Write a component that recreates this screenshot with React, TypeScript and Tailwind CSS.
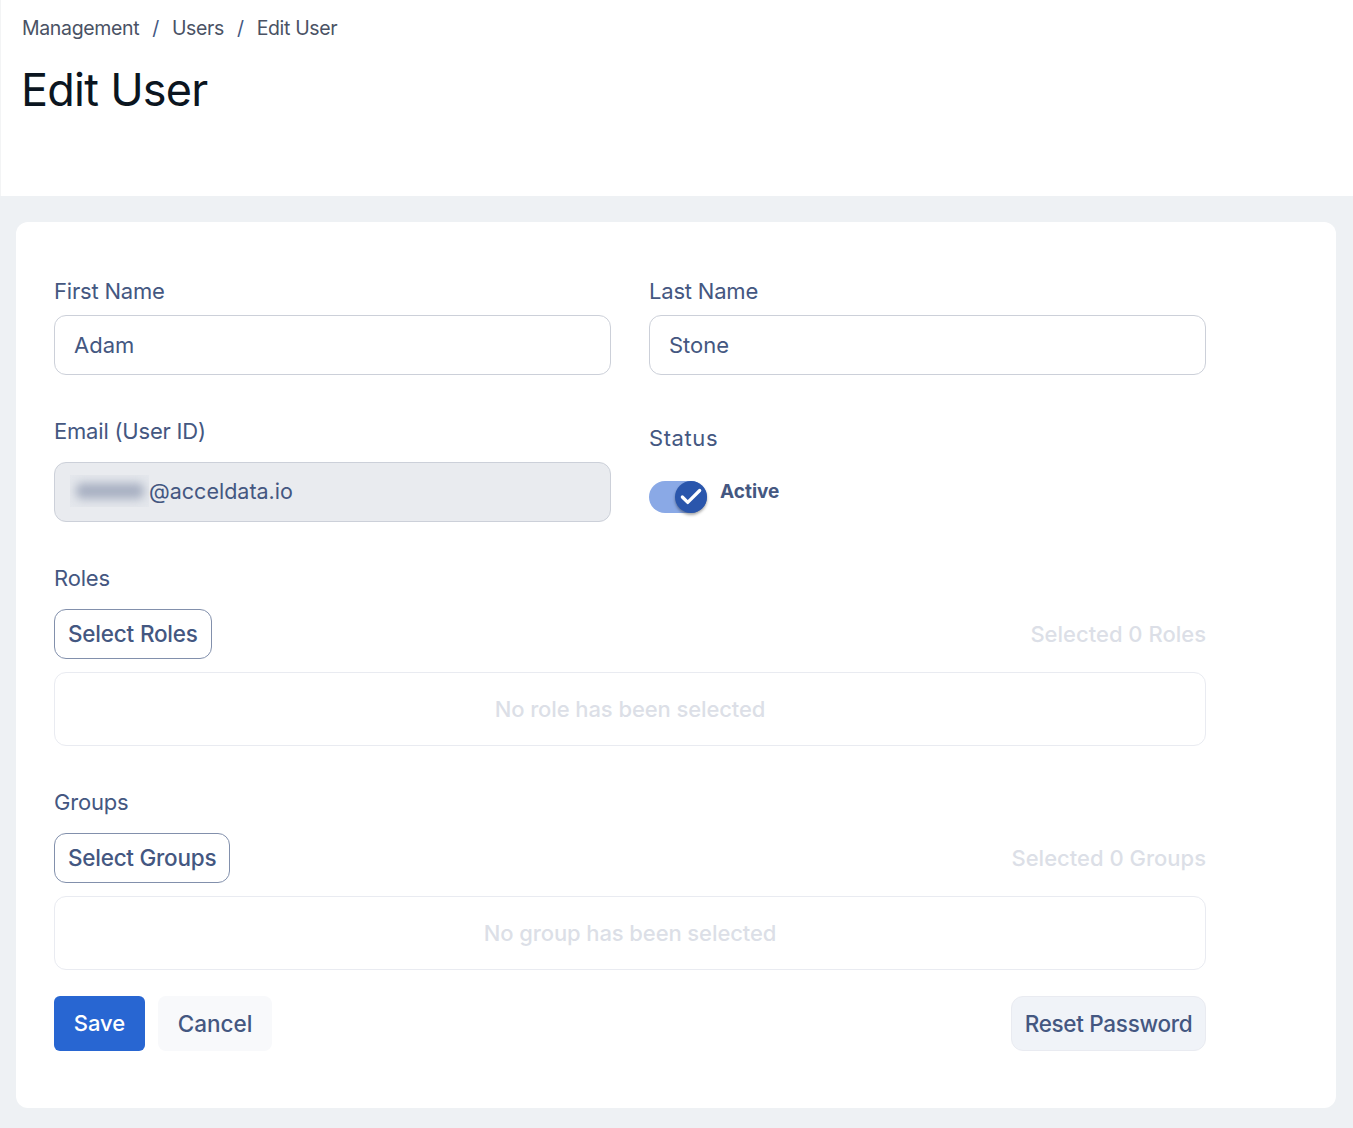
import React from "react";
import { Check } from "lucide-react";

function Label({ children, wide }: { children: React.ReactNode; wide?: boolean }) {
  return (
    <div className={`h-6 text-[22px] leading-6 text-[#445781] ${wide ? "tracking-[0.6px]" : "tracking-[-0.2px]"}`}>
      {children}
    </div>
  );
}

function Picker({ button, count, empty, track }: { button: string; count: string; empty: string; track: string }) {
  return (
    <div>
      <Label>{button.replace("Select ", "")}</Label>
      <div className="mt-[19px] flex items-center justify-between">
        <button className={`h-[50px] px-[13px] rounded-[12px] border border-[#8290ac] bg-white text-[22.5px] font-medium text-[#445781] ${track}`}>
          {button}
        </button>
        <span className="text-[22px] font-medium text-[#dcdfe7]">{count}</span>
      </div>
      <div className="mt-[13px] h-[74px] rounded-[12px] border border-[#e9ebf1] flex items-center justify-center text-[22px] font-medium text-[#dcdfe7] tracking-[-0.1px]">
        {empty}
      </div>
    </div>
  );
}

export default function App() {
  return (
    <div className="min-h-[1128px] bg-[#eef1f4] font-['Inter',sans-serif]">
      <header className="h-[196px] bg-white border-l border-[#f3f4f5] pl-[21px] pt-4">
        <nav className="flex items-center h-[26px] text-[19.5px] text-[#4a5264] tracking-[-0.35px]">
          <span>Management</span>
          <span className="mx-[13px] text-[#445781]">/</span>
          <span>Users</span>
          <span className="mx-[13px] text-[#445781]">/</span>
          <span>Edit User</span>
        </nav>
        <h1 className="mt-5 -ml-px text-[45px] leading-[56px] text-[#0b1520] tracking-[-0.75px]">Edit User</h1>
      </header>
      <main className="pl-4 pr-[17px] pt-[26px] pb-5">
        <div className="bg-white rounded-[12px] pl-[38px] pr-[130px] pt-[57px] pb-[57px]">
          <div className="grid grid-cols-2 gap-x-[38px]">
            <div>
              <Label>First Name</Label>
              <input
                readOnly
                value="Adam"
                className="mt-3 w-full h-[60px] rounded-[12px] border border-[#ccd0d9] bg-white pl-[19px] pr-5 text-[22px] text-[#445781] outline-none"
              />
            </div>
            <div>
              <Label>Last Name</Label>
              <input
                readOnly
                value="Stone"
                className="mt-3 w-full h-[60px] rounded-[12px] border border-[#ccd0d9] bg-white pl-[19px] pr-5 text-[22px] text-[#445781] outline-none"
              />
            </div>
          </div>
          <div className="grid grid-cols-2 gap-x-[38px] mt-[44px]">
            <div>
              <Label>Email (User ID)</Label>
              <div className="mt-[19px] h-[60px] rounded-[12px] border border-[#ccd0d9] bg-[#e9ebef] pl-[15px] pb-[2px] flex items-center text-[21.5px] text-[#445781]">
                <span className="w-[79px] h-[32px] overflow-hidden flex items-center justify-center bg-[#e4e7ec]">
                  <span className="block w-[68px] h-[16px] rounded-[6px] bg-[#a8b0c2] blur-[5px]" />
                </span>
                <span>@acceldata.io</span>
              </div>
            </div>
            <div className="pt-[7px]">
              <Label wide>Status</Label>
              <div className="mt-[31px] flex">
                <div className="relative w-[58px] h-8 rounded-full bg-[#8aa9e6]">
                  <div className="absolute right-0 top-0 w-8 h-8 rounded-full bg-[#2a56ac] shadow-[0_2px_3px_rgba(0,0,0,0.35)] flex items-center justify-center text-white">
                    <Check size={26} strokeWidth={3} />
                  </div>
                </div>
                <span className="ml-[13px] -mt-[1px] h-6 text-[19px] leading-6 font-bold text-[#445781]">Active</span>
              </div>
            </div>
          </div>
          <div className="mt-[44px]">
            <Picker button="Select Roles" count="Selected 0 Roles" empty="No role has been selected" track="tracking-[-0.2px]" />
          </div>
          <div className="mt-[44px]">
            <Picker button="Select Groups" count="Selected 0 Groups" empty="No group has been selected" track="tracking-[-0.25px]" />
          </div>
          <div className="mt-[26px] flex items-center justify-between">
            <div className="flex gap-[13px]">
              <button className="w-[91px] h-[55px] rounded-[6px] bg-[#2866d2] text-white text-[22px] font-medium">Save</button>
              <button className="w-[114px] h-[55px] rounded-[8px] bg-[#f8f9fb] text-[#445781] text-[22.5px] font-medium">Cancel</button>
            </div>
            <button className="w-[195px] h-[55px] rounded-[12px] border border-[#e9ebf1] bg-[#f0f3f8] text-[#445781] text-[22.5px] font-medium tracking-[-0.3px]">
              Reset Password
            </button>
          </div>
        </div>
      </main>
    </div>
  );
}
